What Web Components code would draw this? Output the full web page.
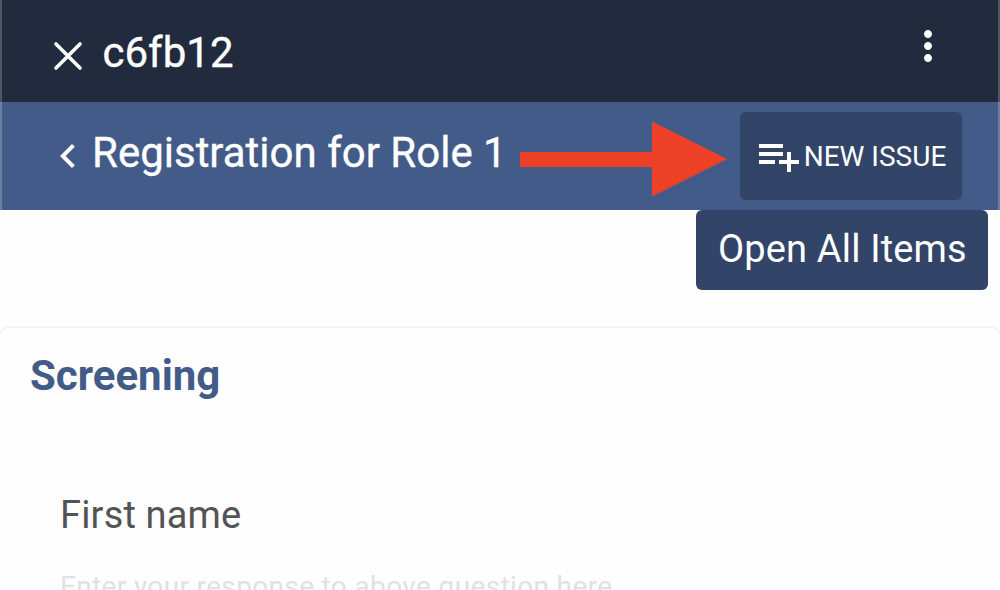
<!DOCTYPE html>
<html lang="en">
<head>
<meta charset="utf-8">
<title>Registration</title>
<style>
html,body{margin:0;height:100%;overflow:hidden;background:#fefefe;font-family:Roboto,"Liberation Sans",sans-serif}
</style>
</head>
<body>
<registration-page></registration-page>
<script>
const define = (name, html) => {
  const t = document.createElement('template');
  t.innerHTML = html;
  customElements.define(name, class extends HTMLElement {
    constructor() {
      super();
      this.attachShadow({mode: 'open'}).append(t.content.cloneNode(true));
    }
  });
};

const shapes = {
  close: '<path d="M6 6 18 18M18 6 6 18" stroke="#fff" stroke-width="1.8" stroke-linecap="round"/>',
  back: '<path d="M15.41 7.41 14 6l-6 6 6 6 1.41-1.41L10.83 12z"/>',
  more: '<path d="M12 8c1.1 0 2-.9 2-2s-.9-2-2-2-2 .9-2 2 .9 2 2 2zm0 2c-1.1 0-2 .9-2 2s.9 2 2 2 2-.9 2-2-.9-2-2-2zm0 6c-1.1 0-2 .9-2 2s.9 2 2 2 2-.9 2-2-.9-2-2-2z"/>',
  add: '<path d="M14 10H2v2h12v-2zm0-4H2v2h12V6zm4 8v-4h-2v4h-4v2h4v4h2v-4h4v-2h-4zM2 16h8v-2H2v2z"/>'
};
customElements.define('app-icon', class extends HTMLElement {
  connectedCallback() {
    if (this.shadowRoot) return;
    this.attachShadow({mode: 'open'}).innerHTML =
      `<style>:host{display:block;flex:none;width:48px;height:48px}svg{display:block}</style>
       <svg width="48" height="48" viewBox="0 0 24 24" fill="#fff">${shapes[this.getAttribute('name')]}</svg>`;
  }
});

define('top-bar', `<style>
  :host{display:flex;box-sizing:border-box;height:102px;padding:0 48px 0 42px;align-items:flex-start;
    background:#222b3d;border:solid #4f5665;border-width:0 2px;color:#fff}
  .close{margin-top:32px}
  .title{flex:1;margin:28px 0 0 10.5px;font-size:42px;line-height:50px;-webkit-text-stroke:.35px #fff}
  .more{margin-top:22px;margin-right:-2px}
</style><app-icon class="close" name="close"></app-icon><div class="title"><slot></slot></div><app-icon class="more" name="more"></app-icon>`);

define('section-bar', `<style>
  :host{display:flex;position:relative;box-sizing:border-box;height:108px;padding:0 36px 0 42px;align-items:flex-start;
    background:#435b88;border:solid #6b7da0;border-width:0 2px;color:#fff}
  .back{margin-top:30px}
  .title{flex:1;white-space:nowrap;margin-top:26px;font-size:42px;line-height:50px;-webkit-text-stroke:.35px #fff}
  ::slotted(action-button){margin-top:10px}
</style><app-icon class="back" name="back"></app-icon><div class="title"><slot></slot></div><slot name="action"></slot>`);

define('action-button', `<style>
  :host{display:flex;box-sizing:border-box;width:222px;height:88px;padding-left:15.3px;align-items:center;
    border-radius:6px;background:#324467;color:#fff;font-size:28px;line-height:34px;white-space:nowrap}
  span{padding:2px 0 0 .4px}
</style><app-icon name="add"></app-icon><span><slot></slot></span>`);

define('open-button', `<style>
  :host{display:block;box-sizing:border-box;width:292px;height:80px;padding:16px 0 0 22px;letter-spacing:.16px;
    border-radius:6px;background:#324467;color:#fff;font-size:38px;line-height:46px;white-space:nowrap}
</style><slot></slot>`);

define('pointer-arrow', `<style>
  :host{display:block;position:absolute;left:518px;top:19px;width:208px;height:76px}svg{display:block}
</style><svg width="208" height="76" viewBox="520 121 208 76"><path fill="#ec4127" d="M520 152H652V121.5L727 159 652 196.5V167H520z"/></svg>`);

define('form-card', `<style>
  :host{display:block;box-sizing:border-box;height:300px;margin-top:38px;border-radius:8px;
    background:#fefefe;box-shadow:0 0 3px rgba(0,0,0,.16);padding:25px 30px 0}
  h2{margin:0;font-size:42px;line-height:46px;font-weight:700;color:#435b88}
</style><h2><slot name="heading"></slot></h2><slot></slot>`);

define('form-field', `<style>
  :host{display:block;margin:93px 0 0 30px;white-space:nowrap}
  .label{font-size:38px;line-height:46px;letter-spacing:.17px;color:#535353}
  .hint{margin-top:32px;font-size:28px;line-height:34px;letter-spacing:.35px;color:#e1e1e1}
</style><div class="label"><slot name="label"></slot></div><div class="hint"><slot></slot></div>`);

define('registration-page', `<style>
  :host{display:block;width:1000px;height:590px;overflow:hidden}
  .tools{display:flex;justify-content:flex-end;padding-right:12px}
</style>
<top-bar>c6fb12</top-bar>
<section-bar>Registration for Role 1<pointer-arrow></pointer-arrow><action-button slot="action">NEW ISSUE</action-button></section-bar>
<div class="tools"><open-button>Open All Items</open-button></div>
<form-card><span slot="heading">Screening</span>
<form-field><span slot="label">First name</span>Enter your response to above question here</form-field></form-card>`);
</script>
</body>
</html>
